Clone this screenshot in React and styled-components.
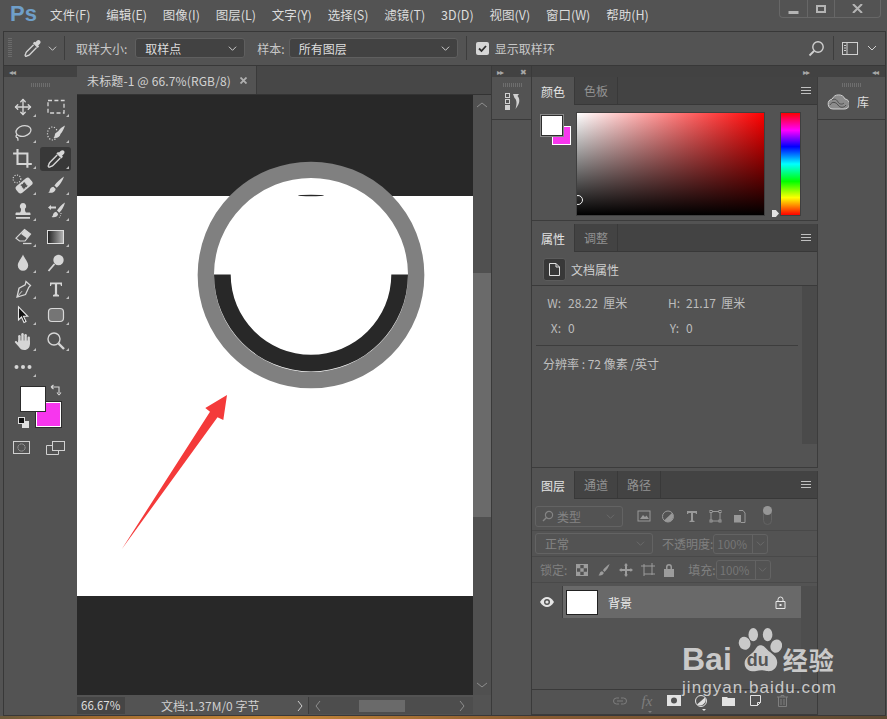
import React from "react";
import styled, { createGlobalStyle } from "styled-components";
import { Move } from "lucide-react";

const GlobalStyle = createGlobalStyle`
    html, body {
        margin: 0;
        padding: 0;
        background: #535353;
    }
    * {
        box-sizing: border-box;
    }
`;

const FONT = `"Noto Sans CJK SC", "Noto Sans", sans-serif`;

const Window = styled.div`
    width: 887px;
    height: 719px;
    display: flex;
    flex-direction: column;
    position: relative;
    overflow: hidden;
    background: #535353;
    color: #d8d8d8;
    font-family: ${FONT};
    font-size: 12px;
`;

/* title bar */
const TitleBar = styled.div`
    height: 31px;
    display: flex;
    align-items: flex-start;
    flex-shrink: 0;
`;
const Logo = styled.div`
    width: 50px;
    padding: 2px 0 0 10px;
    font-family: "Liberation Sans", sans-serif;
    font-size: 22px;
    line-height: 24px;
    font-weight: bold;
    color: #6f9fc9;
`;
const Menu = styled.div`
    display: flex;
    gap: 15.8px;
    padding-top: 6px;
    line-height: 18px;
    font-size: 12.5px;
    color: #dcdcdc;
    white-space: nowrap;
`;
const WinControls = styled.div`
    margin-left: auto;
    margin-right: 6px;
    width: 102px;
    height: 18px;
    display: flex;
    border: 1px solid #676767;
    border-top: none;
    border-radius: 0 0 4px 4px;
`;
const WinButton = styled.div`
    width: ${props => props.$w}px;
    display: flex;
    align-items: center;
    justify-content: center;
    border-left: ${props => (props.$first ? "none" : "1px solid #676767")};
    color: #b4b4b4;
`;

const Workspace = styled.div`
    flex: 1;
    margin: 0 1px 0 3px;
    border: 1px solid #383838;
    display: flex;
    flex-direction: column;
    min-height: 0;
`;

/* options bar */
const OptionsBar = styled.div`
    height: 34px;
    flex-shrink: 0;
    display: flex;
    align-items: center;
    border-bottom: 1px solid #383838;
    padding-bottom: 1px;
    color: #c8c8c8;
`;
const Grip = styled.div`
    width: 4px;
    height: 20px;
    margin-left: 4px;
    background: repeating-linear-gradient(#6a6a6a 0 1px, transparent 1px 2px);
`;
const VLine = styled.div`
    width: 1px;
    height: 24px;
    flex-shrink: 0;
    background: #3d3d3d;
    margin: 0 ${props => props.$m || 8}px;
`;
const OptDropper = styled.div`
    display: flex;
    align-items: center;
    gap: 6px;
    margin-left: 11px;
    color: #d4d4d4;
`;
const OptLabel = styled.span`
    margin-left: ${props => props.$ml || 0}px;
    white-space: nowrap;
`;
const Select = styled.div`
    width: ${props => props.$w}px;
    height: ${props => (props.$dim ? 21 : 20)}px;
    flex-shrink: 0;
    margin-left: ${props => props.$ml || 0}px;
    display: flex;
    align-items: center;
    justify-content: space-between;
    padding: 0 7px 0 9px;
    background: ${props => (props.$dim ? "transparent" : "#424242")};
    border: 1px solid ${props => (props.$dim ? "#636363" : "#5f5f5f")};
    border-radius: 3px;
    color: ${props => (props.$dim ? "#848484" : "#dedede")};
    white-space: nowrap;
`;
const SelectLabel = styled.span`
    display: flex;
    align-items: center;
    gap: 3px;
    margin-left: -3px;
`;
const Check = styled.div`
    width: 13px;
    height: 13px;
    flex-shrink: 0;
    border-radius: 2px;
    background: #d6d6d6;
    display: flex;
    align-items: center;
    justify-content: center;
`;
const OptRight = styled.div`
    margin-left: auto;
    display: flex;
    align-items: center;
    padding-right: 8px;
    color: #d0d0d0;
`;
const OptChevron = styled.div`
    display: flex;
    margin-left: 9px;
`;

/* docks */
const Docks = styled.div`
    flex: 1;
    display: flex;
    min-height: 0;
`;
const Dock = styled.div`
    width: ${props => props.$w}px;
    flex-shrink: 0;
    display: flex;
    flex-direction: column;
    border-left: ${props => (props.$line ? "1px solid #3a3a3a" : "none")};
`;
const DockHead = styled.div`
    height: 11px;
    flex-shrink: 0;
    background: #424242;
    display: flex;
    align-items: center;
    justify-content: ${props => props.$justify || "flex-start"};
    padding: 0 ${props => props.$pad || 5}px;
    gap: 4px;
    color: #a8a8a8;
    font-size: 8px;
    line-height: 11px;
    letter-spacing: -1px;
`;
const GripRow = styled.div`
    height: 16px;
    flex-shrink: 0;
    display: flex;
    justify-content: center;
    align-items: center;
`;
const GripDots = styled.div`
    width: 20px;
    height: 4px;
    background: repeating-linear-gradient(90deg, #6e6e6e 0 1px, transparent 1px 2px);
`;

/* tools */
const ToolGrid = styled.div`
    display: grid;
    grid-template-columns: 33px 33px;
    grid-auto-rows: 26px;
    padding: 1px 0 0 2px;
`;
const Tool = styled.div`
    position: relative;
    width: 31px;
    height: 24px;
    margin: 1px 0 0 1px;
    display: flex;
    align-items: center;
    justify-content: center;
    border-radius: 3px;
    color: #d6d6d6;
    background: ${props => (props.$active ? "#383838" : "transparent")};
    &::after {
        content: "";
        position: absolute;
        right: 2px;
        bottom: 2px;
        border-style: solid;
        border-width: 0 0 3px 3px;
        border-color: transparent transparent #bdbdbd transparent;
    }
`;
const ColorWell = styled.div`
    position: relative;
    height: 50px;
    margin-top: 6px;
`;
const FgSwatch = styled.div`
    position: absolute;
    left: 16px;
    top: 0;
    width: 26px;
    height: 26px;
    background: #fff;
    border: 1px solid #2c2c2c;
    z-index: 1;
`;
const BgSwatch = styled.div`
    position: absolute;
    left: 32px;
    top: 16px;
    width: 25px;
    height: 25px;
    background: #f736ee;
    border: 1px solid #fff;
    outline: 1px solid #2c2c2c;
`;
const SwapIcon = styled.svg`
    position: absolute;
    left: 46px;
    top: -2px;
    color: #d6d6d6;
`;
const DefaultIcon = styled.svg`
    position: absolute;
    left: 14px;
    top: 31px;
`;
const ModeRow = styled.div`
    display: flex;
    gap: 16px;
    margin: 5px 0 0 9px;
    color: #d0d0d0;
`;

/* document */
const TabBar = styled.div`
    height: 29px;
    flex-shrink: 0;
    background: #474747;
    display: flex;
    border-bottom: 1px solid #333;
`;
const DocTab = styled.div`
    width: 180px;
    background: #535353;
    display: flex;
    align-items: center;
    padding: 0 9px 0 10px;
    justify-content: space-between;
    border-right: 1px solid #3a3a3a;
    color: #d2d2d2;
    white-space: nowrap;
    font-size: 12px;
    letter-spacing: 0.14px;
`;
const CanvasRow = styled.div`
    height: 600px;
    flex-shrink: 0;
    display: flex;
`;
const CanvasSvg = styled.svg`
    display: block;
    width: 396px;
    height: 600px;
    flex-shrink: 0;
`;
const VScroll = styled.div`
    flex: 1;
    display: flex;
    flex-direction: column;
    align-items: center;
    background: #505050;
    color: #8e8e8e;
    padding: 4px 0;
`;
const VThumb = styled.div`
    width: 100%;
    height: 245px;
    margin: 162px 0 162px;
    background: #6a6a6a;
`;
const StatusBar = styled.div`
    flex: 1;
    display: flex;
    padding: 2px 0 1px;
    align-items: stretch;
    white-space: nowrap;
`;
const ZoomValue = styled.div`
    width: 48px;
    background: #454545;
    padding-left: 4px;
    line-height: 17px;
    color: #dedede;
    font-size: 11.5px;
`;
const DocInfo = styled.div`
    width: 184px;
    display: flex;
    align-items: center;
    padding: 0 2px 0 36px;
    justify-content: space-between;
    color: #cfcfcf;
    border-right: 1px solid #3c3c3c;
`;
const HScroll = styled.div`
    width: 164px;
    background: #4d4d4d;
    display: flex;
    align-items: center;
    padding: 0 5px;
    color: #8e8e8e;
`;
const HThumb = styled.div`
    width: 46px;
    height: 12px;
    background: #6a6a6a;
    margin: 0 auto 0 33px;
`;

/* panels */
const PanelStack = styled.div`
    flex: 1;
    display: flex;
    flex-direction: column;
    gap: 3px;
    min-height: 0;
`;
const Panel = styled.div`
    height: ${props => (props.$h ? props.$h + "px" : "auto")};
    flex: ${props => (props.$h ? "none" : 1)};
    border-right: 1px solid #3c3c3c;
    border-bottom: 1px solid #3c3c3c;
    display: flex;
    flex-direction: column;
    min-height: 0;
`;
const Tabs = styled.div`
    height: 28px;
    flex-shrink: 0;
    display: flex;
    background: #434343;
    border-bottom: 1px solid #383838;
    padding-right: 6px;
`;
const Tab = styled.div`
    width: 43px;
    display: flex;
    align-items: center;
    justify-content: center;
    margin-bottom: ${props => (props.$active ? "-1px" : 0)};
    background: ${props => (props.$active ? "#535353" : "transparent")};
    color: ${props => (props.$active ? "#e4e4e4" : "#929292")};
    border-right: 1px solid #393939;
`;
const PanelMenu = styled.div`
    margin-left: auto;
    align-self: center;
    width: 10px;
    height: 7px;
    border-top: 1px solid #c0c0c0;
    border-bottom: 1px solid #c0c0c0;
    position: relative;
    &::after {
        content: "";
        position: absolute;
        left: 0;
        right: 0;
        top: 2px;
        height: 1px;
        background: #c0c0c0;
    }
`;
const ColorBody = styled.div`
    flex: 1;
    display: flex;
    padding: 8px 0 0 9px;
`;
const MiniSwatches = styled.div`
    position: relative;
    width: 36px;
    height: 32px;
    margin-top: 2px;
`;
const MiniFg = styled.div`
    position: absolute;
    left: 0;
    top: 0;
    width: 22px;
    height: 21px;
    background: #fff;
    border: 1px solid #2e2e2e;
    outline: 1px solid #888;
    z-index: 1;
`;
const MiniBg = styled.div`
    position: absolute;
    left: 11px;
    top: 11px;
    width: 19px;
    height: 19px;
    background: #f736ee;
    border: 1px solid #fff;
`;
const ColorField = styled.div`
    position: relative;
    width: 187px;
    height: 102px;
    overflow: hidden;
    background: linear-gradient(to bottom, transparent, #000),
        linear-gradient(to right, #fff, #f00);
    outline: 1px solid #3f3f3f;
`;
const FieldMarker = styled.div`
    position: absolute;
    left: -4px;
    bottom: 10px;
    width: 10px;
    height: 10px;
    border-radius: 50%;
    border: 1px solid #f0f0f0;
`;
const HueBar = styled.div`
    position: relative;
    width: 19px;
    height: 102px;
    margin-left: 17px;
    background: linear-gradient(
        to bottom,
        #f00 0%,
        #f0f 17%,
        #00f 33%,
        #0ff 50%,
        #0f0 67%,
        #ff0 83%,
        #f00 100%
    );
    outline: 1px solid #3f3f3f;
`;
const HueMarker = styled.div`
    position: absolute;
    left: -9px;
    bottom: -2px;
    width: 7px;
    height: 7px;
    background: #e4e4e4;
    clip-path: polygon(0 0, 55% 0, 100% 50%, 55% 100%, 0 100%);
`;
const PropHead = styled.div`
    height: 34px;
    flex-shrink: 0;
    display: flex;
    align-items: center;
    gap: 5px;
    padding: 1px 0 0 11px;
    border-bottom: 1px solid #3a3a3a;
    color: #cfcfcf;
`;
const DocIconBox = styled.div`
    width: 23px;
    height: 23px;
    background: #383838;
    border: 1px solid #5c5c5c;
    border-radius: 3px;
    display: flex;
    align-items: center;
    justify-content: center;
    color: #e0e0e0;
`;
const PropBody = styled.div`
    flex: 1;
    display: flex;
    min-height: 0;
`;
const PropContent = styled.div`
    width: 270px;
    padding: 4px 4px 0 4px;
    color: #bdbdbd;
`;
const PropRow = styled.div`
    height: 25px;
    display: grid;
    grid-template-columns: 32px 100px 18px 1fr;
    align-items: center;
`;
const PropKey = styled.span`
    text-align: right;
    padding-right: 7px;
    color: #bcbcbc;
`;
const PropRule = styled.div`
    height: 1px;
    background: #3d3d3d;
    margin: 5px 0 9px 0;
`;
const Resolution = styled.div`
    padding-left: 7px;
    color: #c0c0c0;
`;
const PropScroll = styled.div`
    width: 15px;
    height: 158px;
    background: #4a4a4a;
`;

/* layers */
const LayerFilter = styled.div`
    height: 32px;
    flex-shrink: 0;
    display: flex;
    align-items: center;
    padding: 3px 0 0 3px;
    border-bottom: 1px solid #494949;
    color: #8c8c8c;
`;
const FilterIcons = styled.div`
    display: flex;
    align-items: center;
    gap: 8px;
    margin-left: 14px;
    color: #999;
`;
const Toggle = styled.div`
    position: relative;
    width: 9px;
    height: 18px;
    margin-left: 14px;
    border: 1px solid #636363;
    border-radius: 5px;
    &::before {
        content: "";
        position: absolute;
        left: -1px;
        top: -2px;
        width: 9px;
        height: 9px;
        border-radius: 50%;
        background: #969696;
    }
`;
const LayerOptions = styled.div`
    height: 26px;
    flex-shrink: 0;
    display: flex;
    align-items: center;
    padding-left: 3px;
    border-bottom: 1px solid #494949;
    color: #808080;
    white-space: nowrap;
`;
const Percent = styled.div`
    width: 55px;
    height: 20px;
    flex-shrink: 0;
    border: 1px solid #636363;
    border-radius: 3px;
    display: flex;
    align-items: center;
    color: #767676;
    font-size: 11.5px;
`;
const PercentValue = styled.span`
    width: 39px;
    padding-left: 3px;
    border-right: 1px solid #636363;
    line-height: 18px;
`;
const LockIcons = styled.div`
    display: flex;
    gap: 8px;
    margin: 0 13px 0 8px;
    color: #9c9c9c;
`;
const LayerList = styled.div`
    flex: 1;
    display: flex;
    min-height: 0;
    padding-top: 3px;
`;
const EyeCell = styled.div`
    width: 31px;
    height: 32px;
    display: flex;
    align-items: center;
    justify-content: center;
    border-right: 1px solid #3f3f3f;
    color: #e6e6e6;
`;
const LayerRow = styled.div`
    width: 238px;
    height: 32px;
    display: flex;
    align-items: center;
    padding: 0 15px 0 3px;
    background: #696969;
    color: #ececec;
`;
const Thumb = styled.div`
    width: 32px;
    height: 25px;
    background: #fff;
    border: 1px solid #222;
    margin-right: 10px;
`;
const LayerLock = styled.div`
    margin-left: auto;
    display: flex;
    color: #e8e8e8;
`;
const LayerScroll = styled.div`
    flex: 1;
    background: #4e4e4e;
`;
const LayerFoot = styled.div`
    height: 25px;
    flex-shrink: 0;
    display: flex;
    align-items: center;
    padding: 0 0 3px 81px;
    gap: 13px;
    border-top: 1px solid #3a3a3a;
    color: #e2e2e2;
`;
const FootIcon = styled.div`
    position: relative;
    width: 14px;
    display: flex;
    justify-content: center;
    color: ${props => (props.$dim ? "#7e7e7e" : "#e2e2e2")};
    font-family: "Liberation Serif", serif;
    font-style: italic;
    font-size: 15px;
    line-height: 16px;
    &::after {
        content: "";
        display: ${props => (props.$menu ? "block" : "none")};
        position: absolute;
        left: 8px;
        bottom: -4px;
        border-style: solid;
        border-width: 2px 2px 0 2px;
        border-color: currentColor transparent transparent transparent;
    }
`;

/* library dock */
const LibBlock = styled.div`
    height: 43px;
    border-bottom: 1px solid #3a3a3a;
    display: flex;
    flex-direction: column;
`;
const LibItem = styled.div`
    display: flex;
    align-items: center;
    gap: 8px;
    padding-left: 9px;
    color: #dedede;
`;
const HistoryBlock = styled.div`
    height: 43px;
    border-bottom: 1px solid #3a3a3a;
    display: flex;
    flex-direction: column;
    align-items: center;
    padding-left: 3px;
    color: #d0d0d0;
`;
const Strip = styled.div`
    height: 3px;
    flex-shrink: 0;
    background: linear-gradient(to right, #6b5a3c, #a06a30 10%, #c98838 30%, #8a5c32 60%, #5c4a34 100%);
`;

/* watermark */
const Watermark = styled.div`
    position: absolute;
    left: 682px;
    top: 624px;
    width: 160px;
    color: #c9c9c9;
    font-family: "Liberation Sans", sans-serif;
`;
const MarkRow = styled.div`
    display: flex;
    align-items: flex-end;
    height: 50px;
`;
const MarkBai = styled.span`
    font-size: 32px;
    font-weight: bold;
    line-height: 30px;
`;
const MarkPaw = styled.div`
    position: relative;
    width: 46px;
    height: 50px;
    margin-left: 4px;
    flex-shrink: 0;
`;
const PawSvg = styled.svg`
    display: block;
`;
const MarkDu = styled.span`
    position: absolute;
    left: 11px;
    top: 25px;
    font-size: 18px;
    line-height: 22px;
    font-weight: bold;
    color: #555;
`;
const MarkCn = styled.span`
    margin-left: 1px;
    font-family: "Noto Sans CJK SC", sans-serif;
    font-size: 25px;
    letter-spacing: 1px;
    font-weight: bold;
    line-height: 30px;
`;
const MarkDomain = styled.div`
    margin-top: 4px;
    font-size: 17px;
    line-height: 20px;
    letter-spacing: 1.05px;
    white-space: nowrap;
`;

function Chevron({ color = "currentColor", size = 9 }) {
    return (
        <svg width={size} height={size} viewBox="0 0 10 10">
            <path d="M1 3l4 4 4-4" fill="none" stroke={color} strokeWidth="1" />
        </svg>
    );
}

function Arrow({ dir, h = 12 }) {
    const d = {
        left: "M6 1L2 6l4 5",
        right: "M4 1l4 5-4 5",
        up: "M1 8l5-4 5 4",
        down: "M1 4l5 4 5-4"
    }[dir];
    return (
        <svg width="12" height={h} viewBox="0 0 12 12">
            <path d={d} fill="none" stroke="currentColor" strokeWidth="1" />
        </svg>
    );
}

function Icon({ children, size = 20 }) {
    return (
        <svg width={size} height={size} viewBox="0 0 20 20" fill="currentColor">
            {children}
        </svg>
    );
}

function Dropper({ size = 20 }) {
    return (
        <Icon size={size}>
            <path d="M13 3.5l1.6-1.6c1-1 2.6-1 3.3-.1.9.9.8 2.3-.1 3.2L16 6.8l1 1-1.6 1.6-5-5L12 3l1 .5z" />
            <path
                d="M11.2 6L3.8 13.4c-.8.8-1 2-1.1 2.7-.5.5-.7 1.2-.2 1.7s1.2.4 1.7-.1c.8-.2 1.9-.4 2.7-1.2L14.3 9"
                fill="none"
                stroke="currentColor"
                strokeWidth="1.4"
            />
        </Icon>
    );
}

function BrushShape() {
    return (
        <path d="M18 1.5c-3.6 2.3-7.3 5.8-9.6 9l2.4 2.3c3-2.6 5.8-7 7.2-11.3zM7.4 11.8c-2.6.3-3.5 2.2-3.7 3.6-.1 1-.7 1.6-1.6 2.1 3 .8 7 .2 7.6-3.6z" />
    );
}

const tools = [
    { icon: <Move size={18} strokeWidth={1.8} /> },
    {
        icon: (
            <Icon>
                <rect x="2" y="3.5" width="16" height="12.5" fill="none" stroke="currentColor" strokeWidth="1.3" strokeDasharray="4 2.4" />
            </Icon>
        )
    },
    {
        icon: (
            <Icon>
                <ellipse cx="10.5" cy="8" rx="7.6" ry="5.2" transform="rotate(-14 10.5 8)" fill="none" stroke="currentColor" strokeWidth="1.3" />
                <path d="M4 11.5c-1.6 1.4-1 3 .4 3.2.6 1 .8 2 .4 3" fill="none" stroke="currentColor" strokeWidth="1.3" />
            </Icon>
        )
    },
    {
        icon: (
            <Icon>
                <ellipse cx="6.5" cy="10.5" rx="5" ry="6.5" fill="none" stroke="currentColor" strokeWidth="1.2" strokeDasharray="1.2 1.6" />
                <path d="M19 2.5c-3 1.3-5.4 3.5-7 6l-2.8 2c-.6 1.8-.4 3.3-1.7 4.5 3.6.5 6.5-1.2 7-4 2-2.2 3.6-5.4 4.5-8.5z" />
            </Icon>
        )
    },
    {
        icon: (
            <Icon size={22}>
                <path d="M5 1v13.5h13M1 5h13v13" fill="none" stroke="currentColor" strokeWidth="1.9" />
            </Icon>
        )
    },
    { icon: <Dropper />, active: true },
    {
        icon: (
            <Icon size={22}>
                <rect x="3" y="6.5" width="16" height="8" rx="2.5" transform="rotate(-40 11 10.5)" />
                <rect x="8.5" y="8" width="5" height="5" transform="rotate(-40 11 10.5)" fill="#535353" strokeDasharray="1 1" stroke="#d6d6d6" />
                <circle cx="4.5" cy="4.5" r="3.5" fill="none" stroke="currentColor" strokeWidth="1" strokeDasharray="1 1.3" />
            </Icon>
        )
    },
    { icon: <Icon><BrushShape /></Icon> },
    {
        icon: (
            <Icon>
                <path d="M10 2a3.2 3.2 0 0 1 2 5.7c-.2 1.5.2 2.8 1 3.8h3.5c.8 0 1 .6 1 1.5v1H2.5v-1c0-.9.2-1.5 1-1.5H7c.8-1 1.2-2.3 1-3.8A3.2 3.2 0 0 1 10 2zM3 16h14v1.8H3z" />
            </Icon>
        )
    },
    {
        icon: (
            <Icon>
                <path d="M19 1.5c-3 1.7-6 5-8 8l2.2 2.2c2.6-2.4 4.8-6.2 5.800-10.200zM10.200 10.800c-2.200.4-3 2-3.200 3.200-.1.9-.6 1.400-1.400 1.900 2.600.7 6 .2 6.500-3z" />
                <path d="M2 6.5l3-2.5v1.600h5v1.800H5V9z" />
                <path d="M15 12c0 2-.8 3.5-2 5" fill="none" stroke="currentColor" strokeDasharray="1 1.4" />
            </Icon>
        )
    },
    {
        icon: (
            <Icon>
                <path d="M11.5 2.5l6 4.5-5.500 7H6.500L3 11.200z" fill="none" stroke="currentColor" strokeWidth="1.2" />
                <path d="M11.5 2.5l6 4.5-3.400 4.400-6-4.500z" />
                <path d="M10 16.5h8.5" stroke="currentColor" strokeWidth="1.3" />
            </Icon>
        )
    },
    {
        icon: (
            <svg width="18" height="15" viewBox="0 0 18 15">
                <defs>
                    <linearGradient id="gradTool">
                        <stop offset="0" stopColor="#222" />
                        <stop offset="1" stopColor="#b5b5b5" />
                    </linearGradient>
                </defs>
                <rect x="0.5" y="0.5" width="16" height="13" fill="url(#gradTool)" stroke="#dedede" />
            </svg>
        )
    },
    {
        icon: (
            <Icon>
                <path d="M10 1.5c1.5 4 5.2 7.2 5.2 11a5.2 5.2 0 0 1-10.400 0c0-3.800 3.700-7 5.200-11z" />
            </Icon>
        )
    },
    {
        icon: (
            <Icon>
                <circle cx="12.5" cy="7" r="5.2" />
                <path d="M8.5 11l-6 7" stroke="currentColor" strokeWidth="1.8" />
            </Icon>
        )
    },
    {
        icon: (
            <Icon>
                <path d="M13 2.5l4.5 4-1.7 1.8-3.300 7.200-8.500 2.500 2-8.700 6.200-3.500z" fill="none" stroke="currentColor" strokeWidth="1.3" />
                <path d="M4.500 17.500L9 12.200" stroke="currentColor" strokeWidth="1" />
            </Icon>
        )
    },
    {
        icon: (
            <Icon>
                <path d="M4 3.5h12v3.500h-1l-.6-1.700h-3.300v10l1.900.8v1.400H7v-1.400l1.900-.8v-10H5.600L5 7H4z" />
            </Icon>
        )
    },
    {
        icon: (
            <Icon>
                <path d="M5.500 1.800V15l3-3 2.500 5.500 2-1-2.500-5.200h4.200z" fill="#111" stroke="#e8e8e8" strokeWidth="1.1" />
            </Icon>
        )
    },
    {
        icon: (
            <Icon>
                <rect x="2.5" y="3.5" width="15" height="13" rx="3.5" fill="#757575" stroke="#d8d8d8" strokeWidth="1.2" />
            </Icon>
        )
    },
    {
        icon: (
            <Icon>
                <rect x="5.2" y="4" width="2.4" height="9" rx="1.2" />
                <rect x="8.3" y="2" width="2.4" height="10" rx="1.2" />
                <rect x="11.4" y="3" width="2.4" height="10" rx="1.2" />
                <rect x="14.5" y="5.5" width="2.4" height="8" rx="1.2" />
                <path d="M5.200 9.500h11.700v3.500c0 3.500-2.200 6-5.500 6-2.800 0-4.400-1.300-5.600-3.300L2 11.600c-.7-1 .6-2.100 1.600-1.300l1.600 1.400z" />
            </Icon>
        )
    },
    {
        icon: (
            <Icon>
                <circle cx="8" cy="8" r="6" fill="none" stroke="currentColor" strokeWidth="1.4" />
                <path d="M12.5 12.5l5.5 5.5" stroke="currentColor" strokeWidth="2.4" />
            </Icon>
        )
    },
    {
        icon: (
            <Icon>
                <circle cx="3.5" cy="10" r="2" />
                <circle cx="10" cy="10" r="2" />
                <circle cx="16.5" cy="10" r="2" />
            </Icon>
        )
    }
];

const menuItems = ["文件(F)", "编辑(E)", "图像(I)", "图层(L)", "文字(Y)", "选择(S)", "滤镜(T)", "3D(D)", "视图(V)", "窗口(W)", "帮助(H)"];

function TitleArea() {
    return (
        <TitleBar>
            <Logo>Ps</Logo>
            <Menu>
                {menuItems.map(item => (
                    <span key={item}>{item}</span>
                ))}
            </Menu>
            <WinControls>
                <WinButton $w={27} $first>
                    <svg width="11" height="10" viewBox="0 0 11 10">
                        <rect x="0.5" y="7" width="10" height="3" fill="currentColor" />
                    </svg>
                </WinButton>
                <WinButton $w={27}>
                    <svg width="10" height="8" viewBox="0 0 10 8">
                        <rect x="1" y="1" width="8" height="6" fill="none" stroke="currentColor" strokeWidth="2" />
                    </svg>
                </WinButton>
                <WinButton $w={46}>
                    <svg width="11" height="9" viewBox="0 0 11 9">
                        <path d="M1 0l9 9M10 0L1 9" stroke="currentColor" strokeWidth="2" />
                    </svg>
                </WinButton>
            </WinControls>
        </TitleBar>
    );
}

function Options() {
    return (
        <OptionsBar>
            <Grip />
            <OptDropper>
                <Dropper size={19} />
                <Chevron />
            </OptDropper>
            <VLine $m={7} />
            <OptLabel $ml={4}>取样大小:</OptLabel>
            <Select $w={110} $ml={8}>
                取样点 <Chevron />
            </Select>
            <OptLabel $ml={12}>样本:</OptLabel>
            <Select $w={169} $ml={4}>
                所有图层 <Chevron />
            </Select>
            <VLine $m={8.5} />
            <Check>
                <svg width="11" height="11" viewBox="0 0 11 11">
                    <path d="M2 5.5l2.5 2.5L9 3" fill="none" stroke="#2e2e2e" strokeWidth="1.8" />
                </svg>
            </Check>
            <OptLabel $ml={6}>显示取样环</OptLabel>
            <OptRight>
                <svg width="17" height="17" viewBox="0 0 17 17">
                    <circle cx="10" cy="7" r="5.2" fill="none" stroke="currentColor" strokeWidth="1.4" />
                    <path d="M6 11l-4.5 4.5" stroke="currentColor" strokeWidth="1.8" />
                </svg>
                <VLine $m={8} />
                <svg width="16" height="13" viewBox="0 0 16 13">
                    <rect x="0.5" y="0.5" width="15" height="12" fill="none" stroke="currentColor" />
                    <path d="M5 1v11" stroke="currentColor" />
                    <path d="M2 3.5h2M2 6h2M2 8.5h2" stroke="currentColor" />
                </svg>
                <OptChevron>
                    <Chevron size={10} />
                </OptChevron>
            </OptRight>
        </OptionsBar>
    );
}

function ToolDock() {
    return (
        <Dock $w={73}>
            <DockHead>◂◂</DockHead>
            <GripRow>
                <GripDots />
            </GripRow>
            <ToolGrid>
                {tools.map((tool, i) => (
                    <Tool key={i} $active={tool.active}>
                        {tool.icon}
                    </Tool>
                ))}
            </ToolGrid>
            <ColorWell>
                <BgSwatch />
                <FgSwatch />
                <SwapIcon width="13" height="13" viewBox="0 0 13 13">
                    <path d="M1 3h8v6M1 3l2.5-2M1 3l2.5 2M9 11l-2-2.5M9 11l2-2.5" fill="none" stroke="currentColor" strokeWidth="1.1" />
                </SwapIcon>
                <DefaultIcon width="11" height="11" viewBox="0 0 11 11">
                    <rect x="4" y="4" width="7" height="7" fill="#e0e0e0" />
                    <rect x="0.5" y="0.5" width="6" height="6" fill="#111" stroke="#ddd" />
                </DefaultIcon>
            </ColorWell>
            <ModeRow>
                <svg width="17" height="13" viewBox="0 0 17 13">
                    <rect x="0.5" y="0.5" width="16" height="12" fill="none" stroke="currentColor" />
                    <circle cx="8.5" cy="6.5" r="3.6" fill="none" stroke="currentColor" strokeDasharray="1 1.2" />
                </svg>
                <svg width="19" height="14" viewBox="0 0 19 14">
                    <rect x="6.5" y="0.5" width="12" height="9" fill="none" stroke="currentColor" />
                    <path d="M6.5 4.5h-6v9h12v-4" fill="none" stroke="currentColor" />
                </svg>
            </ModeRow>
        </Dock>
    );
}

function DocumentArea() {
    return (
        <Dock $w={414}>
            <TabBar>
                <DocTab>
                    未标题-1 @ 66.7%(RGB/8)
                    <svg width="7" height="7" viewBox="0 0 7 7">
                        <path d="M.5.5l6 6M6.5.5l-6 6" stroke="#b0b0b0" strokeWidth="1.8" />
                    </svg>
                </DocTab>
            </TabBar>
            <CanvasRow>
                <CanvasSvg viewBox="0 0 396 600">
                    <rect width="396" height="600" fill="#282828" />
                    <rect y="101" width="396" height="400" fill="#fff" />
                    <circle cx="234" cy="180" r="105.2" fill="#fff" stroke="#808080" strokeWidth="16.3" />
                    <path d="M137 179.5A97 97 0 0 0 331 179.5H314.3A80.3 80.3 0 0 1 153.7 179.5Z" fill="#282828" />
                    <ellipse cx="234" cy="100.5" rx="13" ry="0.8" fill="#282828" />
                    <polygon points="150,300 128.3,313 133,316.7 44.7,454.3 140.5,322.3 146.3,325" fill="#f43a3a" />
                </CanvasSvg>
                <VScroll>
                    <Arrow dir="up" />
                    <VThumb />
                    <Arrow dir="down" />
                </VScroll>
            </CanvasRow>
            <StatusBar>
                <ZoomValue>66.67%</ZoomValue>
                <DocInfo>
                    文档:1.37M/0 字节
                    <Arrow dir="right" />
                </DocInfo>
                <HScroll>
                    <Arrow dir="left" />
                    <HThumb />
                    <Arrow dir="right" />
                </HScroll>
            </StatusBar>
        </Dock>
    );
}

function HistoryDock() {
    return (
        <Dock $w={40} $line>
            <DockHead $justify="space-between">
                <span>▸▸</span>
                <span>✖</span>
            </DockHead>
            <HistoryBlock>
                <GripRow>
                    <GripDots />
                </GripRow>
                <svg width="20" height="17" viewBox="0 0 20 17">
                    <rect x="2.5" y="0.5" width="4" height="4" fill="none" stroke="currentColor" />
                    <rect x="2.5" y="6.5" width="4" height="4" fill="none" stroke="currentColor" />
                    <rect x="2" y="12" width="5" height="5" fill="currentColor" />
                    <path d="M10 1h6l-1.5 2c2.500 2.500 3 7-2 13 1.500-5 1.500-9-1-11z" fill="currentColor" />
                </svg>
            </HistoryBlock>
        </Dock>
    );
}

function ColorPanel() {
    return (
        <Panel $h={144}>
            <Tabs>
                <Tab $active>颜色</Tab>
                <Tab>色板</Tab>
                <PanelMenu />
            </Tabs>
            <ColorBody>
                <MiniSwatches>
                    <MiniBg />
                    <MiniFg />
                </MiniSwatches>
                <ColorField>
                    <FieldMarker />
                </ColorField>
                <HueBar>
                    <HueMarker />
                </HueBar>
            </ColorBody>
        </Panel>
    );
}

function PropertiesPanel() {
    return (
        <Panel $h={244}>
            <Tabs>
                <Tab $active>属性</Tab>
                <Tab>调整</Tab>
                <PanelMenu />
            </Tabs>
            <PropHead>
                <DocIconBox>
                    <svg width="11" height="13" viewBox="0 0 11 13">
                        <path d="M.5.5H7l3.5 3.5v8.5H.5zM7 .5V4h3.5" fill="none" stroke="currentColor" />
                    </svg>
                </DocIconBox>
                文档属性
            </PropHead>
            <PropBody>
                <PropContent>
                    <PropRow>
                        <PropKey>W:</PropKey>
                        <span>28.22&nbsp;&nbsp;厘米</span>
                        <PropKey>H:</PropKey>
                        <span>21.17&nbsp;&nbsp;厘米</span>
                    </PropRow>
                    <PropRow>
                        <PropKey>X:</PropKey>
                        <span>0</span>
                        <PropKey>Y:</PropKey>
                        <span>0</span>
                    </PropRow>
                    <PropRule />
                    <Resolution>分辨率 : 72 像素 /英寸</Resolution>
                </PropContent>
                <PropScroll />
            </PropBody>
        </Panel>
    );
}

function LayersPanel() {
    return (
        <Panel>
            <Tabs>
                <Tab $active>图层</Tab>
                <Tab>通道</Tab>
                <Tab>路径</Tab>
                <PanelMenu />
            </Tabs>
            <LayerFilter>
                <Select $w={88} $dim>
                    <SelectLabel>
                        <svg width="12" height="12" viewBox="0 0 12 12">
                            <circle cx="7" cy="5" r="3.6" fill="none" stroke="currentColor" strokeWidth="1.2" />
                            <path d="M4.5 7.5L1 11" stroke="currentColor" strokeWidth="1.4" />
                        </svg>
                        类型
                    </SelectLabel>
                    <Chevron color="#6d6d6d" />
                </Select>
                <FilterIcons>
                    <svg width="16" height="13" viewBox="0 0 16 13">
                        <rect x="1" y="1" width="12" height="10" fill="none" stroke="currentColor" />
                        <path d="M3 9l3-4 2 2 1.5-1.5L12 9z" fill="currentColor" />
                    </svg>
                    <svg width="16" height="13" viewBox="0 0 16 13">
                        <circle cx="7" cy="6.5" r="5.5" fill="none" stroke="currentColor" />
                        <path d="M11 3L3 10.5A5.5 5.5 0 0 0 11 3z" fill="currentColor" />
                    </svg>
                    <svg width="16" height="13" viewBox="0 0 16 13">
                        <path d="M2 1h10v3h-1L10.5 3H8v7.5l1.5.5v1h-5v-1l1.500-.5V3H3.500L3 4H2z" fill="currentColor" />
                    </svg>
                    <svg width="16" height="13" viewBox="0 0 16 13">
                        <rect x="2" y="1.5" width="9" height="9.5" fill="none" stroke="currentColor" />
                        <rect x="1" y=".5" width="2" height="2" fill="#535353" stroke="currentColor" />
                        <rect x="10" y=".5" width="2" height="2" fill="#535353" stroke="currentColor" />
                        <rect x="1" y="10" width="2" height="2" fill="#535353" stroke="currentColor" />
                        <rect x="10" y="10" width="2" height="2" fill="#535353" stroke="currentColor" />
                    </svg>
                    <svg width="16" height="13" viewBox="0 0 16 13">
                        <path d="M6 .5h4l2 2.5v9.500H8" fill="none" stroke="currentColor" />
                        <rect x="1" y="5" width="7" height="7.5" fill="currentColor" />
                    </svg>
                </FilterIcons>
                <Toggle />
            </LayerFilter>
            <LayerOptions>
                <Select $w={118} $dim>
                    正常 <Chevron color="#6d6d6d" />
                </Select>
                <OptLabel $ml={9}>不透明度:</OptLabel>
                <Percent>
                    <PercentValue>100%</PercentValue>&nbsp;
                    <Chevron color="#6d6d6d" />
                </Percent>
            </LayerOptions>
            <LayerOptions>
                <OptLabel $ml={5}>锁定:</OptLabel>
                <LockIcons>
                    <svg width="14" height="14" viewBox="0 0 14 14">
                        <rect x="1.5" y="1.5" width="11" height="11" fill="none" stroke="currentColor" />
                        <path d="M2 2h3.3v3.3H2zM8.700 2H12v3.300H8.700zM5.300 5.300h3.400v3.400H5.300zM2 8.700h3.300V12H2zM8.700 8.700H12V12H8.700z" fill="currentColor" />
                    </svg>
                    <svg width="14" height="14" viewBox="0 0 20 20" fill="currentColor">
                        <BrushShape />
                    </svg>
                    <svg width="14" height="14" viewBox="0 0 14 14">
                        <path d="M7 0l2 2.5H8V6h3.5V5L14 7l-2.500 2V8H8v3.500h1L7 14l-2-2.500h1V8H2.500v1L0 7l2.500-2v1H6V2.500H5z" fill="currentColor" />
                    </svg>
                    <svg width="14" height="14" viewBox="0 0 14 14">
                        <path d="M0 3h14M3 1v12M11 0v12M3 11h11" fill="none" stroke="currentColor" />
                    </svg>
                    <svg width="12" height="14" viewBox="0 0 12 14">
                        <path d="M3 6V4a3 3 0 0 1 6 0v2h2v8H1V6zM4.5 6h3V4a1.5 1.5 0 0 0-3 0z" fill="currentColor" fillRule="evenodd" />
                    </svg>
                </LockIcons>
                <OptLabel>填充:</OptLabel>
                <Percent>
                    <PercentValue>100%</PercentValue>&nbsp;
                    <Chevron color="#6d6d6d" />
                </Percent>
            </LayerOptions>
            <LayerList>
                <EyeCell>
                    <svg width="14" height="10" viewBox="0 0 14 10">
                        <path d="M0 5c2-3.5 4.500-5 7-5s5 1.500 7 5c-2 3.500-4.500 5-7 5S2 8.500 0 5z" fill="currentColor" />
                        <circle cx="7" cy="5" r="3" fill="#535353" />
                        <circle cx="7" cy="5" r="1.6" fill="currentColor" />
                    </svg>
                </EyeCell>
                <LayerRow>
                    <Thumb />
                    背景
                    <LayerLock>
                        <svg width="11" height="13" viewBox="0 0 11 13">
                            <path d="M3 5.5v-2a2.5 2.5 0 0 1 5 0v2M1 5.5h9v7H1z" fill="none" stroke="currentColor" />
                            <rect x="4.5" y="8" width="2" height="2" fill="currentColor" />
                        </svg>
                    </LayerLock>
                </LayerRow>
                <LayerScroll />
            </LayerList>
            <LayerFoot>
                <FootIcon $dim>
                    <svg width="14" height="8" viewBox="0 0 14 8">
                        <path d="M6 1H3.5a3 3 0 0 0 0 6H6M8 1h2.5a3 3 0 0 1 0 6H8M4 4h6" fill="none" stroke="currentColor" />
                    </svg>
                </FootIcon>
                <FootIcon $dim $menu>fx</FootIcon>
                <FootIcon>
                    <svg width="14" height="11" viewBox="0 0 14 11">
                        <path d="M0 0h14v11H0zM7 2.5a3 3 0 1 0 0 6 3 3 0 0 0 0-6z" fill="currentColor" fillRule="evenodd" />
                    </svg>
                </FootIcon>
                <FootIcon $menu>
                    <svg width="12" height="12" viewBox="0 0 12 12">
                        <circle cx="6" cy="6" r="5.5" fill="none" stroke="currentColor" />
                        <path d="M10 2.5L2 9.5A5.5 5.5 0 0 0 10 2.5z" fill="currentColor" />
                    </svg>
                </FootIcon>
                <FootIcon>
                    <svg width="13" height="10" viewBox="0 0 13 10">
                        <path d="M0 1h5l1 1h7v8H0z" fill="currentColor" />
                    </svg>
                </FootIcon>
                <FootIcon>
                    <svg width="11" height="11" viewBox="0 0 11 11">
                        <path d="M.5.5h10v7l-3 3h-7z" fill="none" stroke="currentColor" />
                        <path d="M10.5 7.5h-3v3" fill="none" stroke="currentColor" />
                    </svg>
                </FootIcon>
                <FootIcon $dim>
                    <svg width="11" height="12" viewBox="0 0 11 12">
                        <path d="M0 2h11M4 2V.5h3V2M1.5 2v9.5h8V2M4 4v6M7 4v6" fill="none" stroke="currentColor" />
                    </svg>
                </FootIcon>
            </LayerFoot>
        </Panel>
    );
}

function LibraryDock() {
    return (
        <Dock $w={67}>
            <DockHead $justify="flex-end" $pad={7}>◂◂</DockHead>
            <LibBlock>
                <GripRow>
                    <GripDots />
                </GripRow>
                <LibItem>
                    <svg width="22" height="16" viewBox="0 0 22 16">
                        <path d="M6 15a5 5 0 0 1-.8-9.900A7 7 0 0 1 18 5a5 5 0 0 1-1 10z" fill="#8c8c8c" stroke="#d0d0d0" />
                        <path d="M3 11c2-4 6-3 8 0s6 3 8 0M5 6c3-2 5 0 6 2s4 3 6 1" fill="none" stroke="#4e4e4e" />
                    </svg>
                    库
                </LibItem>
            </LibBlock>
        </Dock>
    );
}

function BaiduMark() {
    return (
        <Watermark>
            <MarkRow>
                <MarkBai>Bai</MarkBai>
                <MarkPaw>
                    <PawSvg width="46" height="50" viewBox="0 0 48 50" fill="#c9c9c9">
                        <ellipse cx="18" cy="10" rx="5" ry="7" />
                        <ellipse cx="33" cy="10" rx="5" ry="7" />
                        <ellipse cx="9" cy="19" rx="6" ry="7" transform="rotate(-20 9 19)" />
                        <ellipse cx="42" cy="22" rx="6" ry="7" transform="rotate(20 42 22)" />
                        <path d="M25 21c4 0 6 3 9 6 4 3 9 6 9 12 0 6-5 10-11 9-4-1-7-1-11 0-5 1-12-1-12-8 0-6 5-8 9-12 3-3 4-7 7-7z" />
                    </PawSvg>
                    <MarkDu>du</MarkDu>
                </MarkPaw>
                <MarkCn>经验</MarkCn>
            </MarkRow>
            <MarkDomain>jingyan.baidu.com</MarkDomain>
        </Watermark>
    );
}

function App() {
    return (
        <Window>
            <GlobalStyle />
            <TitleArea />
            <Workspace>
                <Options />
                <Docks>
                    <ToolDock />
                    <DocumentArea />
                    <HistoryDock />
                    <Dock $w={287} $line>
                        <DockHead $justify="flex-end" $pad={9}>▸▸</DockHead>
                        <PanelStack>
                            <ColorPanel />
                            <PropertiesPanel />
                            <LayersPanel />
                        </PanelStack>
                    </Dock>
                    <LibraryDock />
                </Docks>
            </Workspace>
            <Strip />
            <BaiduMark />
        </Window>
    );
}

export default App;
